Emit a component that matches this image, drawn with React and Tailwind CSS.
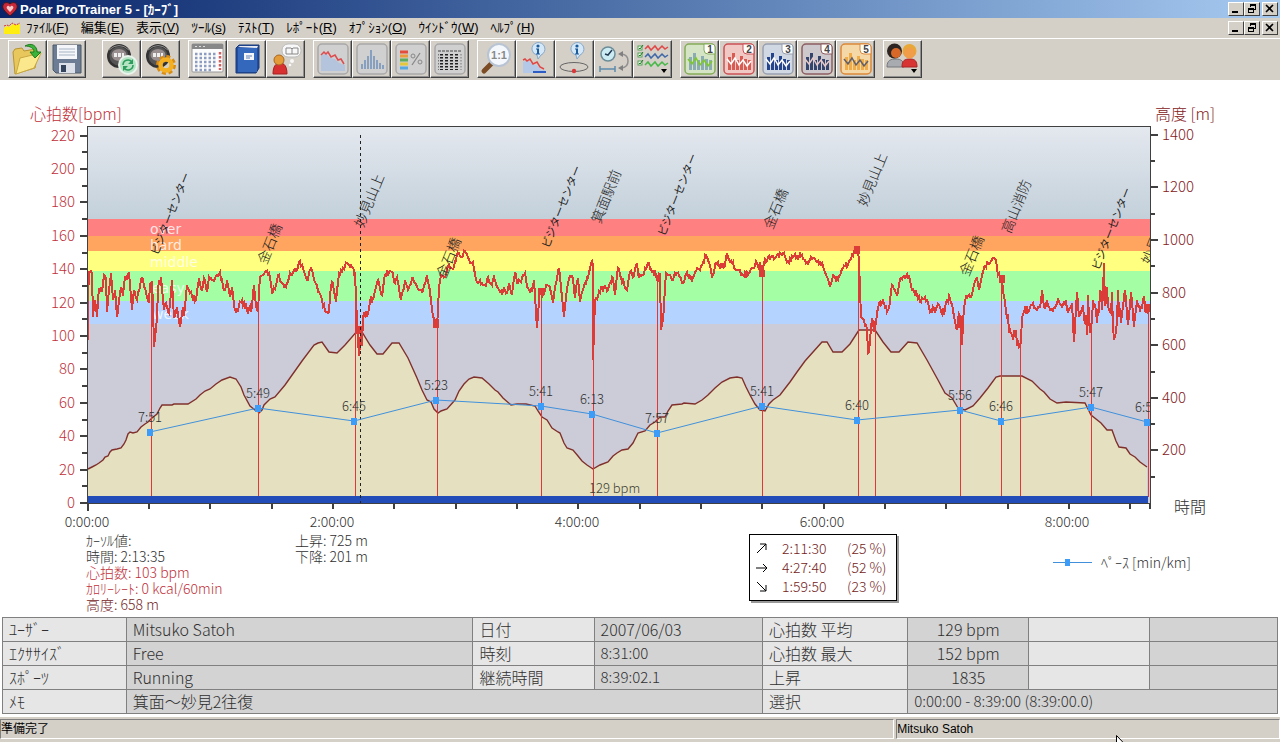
import React from "react";

/* ---------- chart data ---------- */

const heartRate = [
  [88, 340], [88, 300], [89, 272], [92, 273], [93, 317], [95, 300], [97, 317], [99, 288], [102, 292], [104, 275], [106, 278],
  [107, 312], [109, 290], [111, 273], [113, 300], [115, 290], [117, 317], [121, 287], [123, 296], [125, 277], [127, 280],
  [129, 272], [132, 310], [134, 290], [137, 300], [142, 278], [145, 288], [147, 298], [149, 303], [150, 284], [152, 282],
  [153, 306], [154, 347], [157, 318], [158, 288], [161, 277], [164, 310], [166, 303], [169, 313], [172, 280], [174, 318],
  [177, 307], [180, 327], [183, 307], [184, 316], [187, 285], [190, 293], [196, 300], [199, 280], [202, 290], [204, 278],
  [207, 292], [209, 277], [213, 280], [217, 275], [220, 272], [223, 287], [225, 290], [227, 282], [230, 297], [232, 287],
  [234, 305], [238, 312], [242, 300], [247, 310], [250, 306], [251, 312], [254, 285], [256, 306], [258, 312], [260, 277],
  [265, 272], [269, 273], [272, 293], [276, 285], [278, 275], [282, 283], [286, 287], [290, 273], [293, 272], [297, 270],
  [300, 261], [303, 268], [307, 280], [311, 268], [315, 282], [319, 292], [322, 300], [326, 312], [329, 312], [331, 286],
  [333, 283], [336, 302], [339, 273], [343, 268], [347, 263], [350, 267], [354, 270], [356, 290], [357, 328], [359, 356],
  [361, 330], [362, 346], [363, 317], [368, 313], [370, 301], [374, 296], [378, 280], [382, 295], [385, 275], [392, 272],
  [395, 283], [397, 277], [401, 300], [405, 280], [408, 290], [412, 278], [417, 287], [422, 292], [427, 275], [430, 292],
  [432, 310], [435, 320], [437, 328], [439, 287], [441, 275], [445, 277], [449, 265], [454, 267], [457, 254], [462, 257],
  [465, 251], [467, 254], [470, 263], [473, 262], [476, 280], [482, 283], [486, 287], [488, 277], [492, 285], [494, 277],
  [498, 288], [502, 295], [504, 287], [507, 293], [509, 283], [512, 295], [515, 272], [517, 283], [521, 282], [525, 273],
  [527, 287], [532, 292], [534, 280], [537, 328], [540, 290], [542, 297], [545, 291], [547, 285], [550, 287], [553, 303],
  [556, 283], [559, 268], [562, 296], [564, 317], [567, 287], [569, 278], [573, 278], [575, 298], [578, 278], [580, 302],
  [583, 290], [588, 278], [591, 263], [593, 265], [593, 360], [595, 300], [600, 293], [602, 287], [608, 290], [610, 283],
  [613, 278], [615, 295], [618, 268], [621, 278], [627, 290], [630, 272], [633, 277], [637, 263], [639, 278], [643, 275],
  [648, 263], [652, 272], [655, 272], [657, 280], [660, 274], [661, 330], [663, 320], [666, 273], [668, 275], [672, 280],
  [677, 273], [683, 283], [687, 272], [692, 282], [695, 272], [700, 270], [706, 255], [709, 263], [712, 278], [716, 263],
  [722, 267], [725, 266], [727, 253], [732, 263], [737, 270], [743, 275], [748, 275], [752, 268], [757, 263], [759, 270],
  [760, 262], [762, 277], [764, 263], [768, 257], [775, 258], [783, 253], [789, 263], [793, 257], [802, 255], [807, 262],
  [811, 257], [817, 262], [822, 263], [825, 272], [830, 287], [833, 275], [838, 280], [843, 268], [848, 265], [852, 255],
  [855, 250], [858, 250], [859, 262], [861, 317], [864, 320], [867, 328], [868, 353], [870, 340], [872, 318], [874, 332],
  [877, 312], [880, 302], [884, 303], [887, 312], [890, 302], [892, 285], [897, 295], [901, 278], [905, 278], [909, 275],
  [912, 290], [917, 295], [920, 302], [925, 297], [928, 302], [931, 310], [935, 313], [940, 307], [944, 315], [947, 300],
  [950, 298], [953, 310], [956, 327], [958, 320], [960, 317], [962, 345], [964, 307], [966, 295], [970, 297], [973, 290],
  [977, 277], [979, 290], [983, 272], [988, 263], [994, 258], [996, 260], [998, 275], [1002, 280], [1004, 297], [1007, 317],
  [1010, 330], [1013, 340], [1016, 330], [1017, 346], [1020, 347], [1022, 317], [1025, 308], [1028, 312], [1033, 303],
  [1037, 310], [1040, 307], [1042, 290], [1044, 307], [1047, 300], [1050, 310], [1055, 308], [1058, 298], [1062, 307],
  [1066, 300], [1068, 313], [1072, 303], [1074, 342], [1077, 292], [1079, 317], [1083, 305], [1087, 335], [1088, 295],
  [1090, 333], [1093, 300], [1097, 323], [1100, 290], [1102, 310], [1104, 263], [1105, 306], [1107, 287], [1110, 312],
  [1112, 292], [1113, 327], [1116, 332], [1118, 290], [1121, 323], [1123, 307], [1125, 290], [1128, 325], [1131, 292],
  [1134, 327], [1137, 300], [1140, 310], [1143, 300], [1147, 312], [1150, 307],
];

// stretches where the sensor jumps around more than usual
const noisy = [[234, 252, 5], [864, 876, 7], [929, 943, 6], [956, 962, 10], [1007, 1021, 10], [1084, 1119, 13], [1142, 1150, 7]];

function jitter(x) {
  const range = noisy.find(([from, to]) => x >= from && x <= to);
  const s = Math.sin(x * 127.1) * 43758.5453;
  return (s - Math.floor(s) - 0.5) * 2 * (range ? range[2] : 3);
}

function heartRatePath() {
  const out = [];
  for (let i = 0; i < heartRate.length - 1; i++) {
    const [x0, y0] = heartRate[i];
    const [x1, y1] = heartRate[i + 1];
    out.push(`${x0},${y0}`);
    for (let x = x0 + 1; x < x1; x++) {
      const y = y0 + ((y1 - y0) * (x - x0)) / (x1 - x0);
      out.push(`${x},${(y + jitter(x)).toFixed(1)}`);
    }
  }
  return out.join(" ");
}

const altitude =
  "88,469 92,467 96,465 99,463 103,460 105,457 108,456 110,452 112,450 117,449 121,448 124,444 126,440 128,434 130,432 133,433 137,432 141,427 145,424 148,422 152,418 157,414 160,408 162,405 172,405 174,404 188,404 196,399 200,395 205,391 210,389 216,384 222,380 230,377 236,379 241,387 244,395 250,406 255,410 257,410 259,413 262,410 264,405 270,399 275,397 285,385 302,361 314,345 318,343 322,342 329,352 337,353 345,345 358,330 362,332 370,345 377,354 383,354 392,343 399,343 408,358 417,378 422,390 427,400 431,402 434,409 438,413 441,411 447,409 455,400 459,391 464,384 469,379 474,377 482,378 489,384 495,390 498,392 503,398 511,405 517,404 526,404 535,406 538,411 542,417 547,420 552,428 558,432 560,433 564,443 567,448 573,450 578,456 582,461 587,465 593,469 600,465 608,462 613,456 617,453 622,450 628,449 633,443 638,433 645,431 650,425 655,422 660,417 665,417 668,411 672,405 682,404 684,403 695,404 702,400 708,395 715,388 722,382 730,378 737,377 742,378 746,387 750,395 755,404 760,410 765,411 769,404 773,400 780,395 790,382 797,372 805,361 822,342 827,342 833,352 842,352 850,344 859,330 875,330 883,342 891,352 899,352 908,342 917,343 927,360 938,380 945,393 952,398 958,408 965,410 973,406 980,398 988,388 996,377 1000,376 1022,376 1032,381 1040,389 1044,392 1050,399 1057,403 1066,402 1085,403 1089,411 1091,415 1101,423 1107,430 1112,430 1116,441 1119,447 1126,448 1130,454 1135,457 1140,462 1147,467";

// x and the height at which the line leaves the heart rate curve
const lapLines = [
  [151, 290], [258, 300], [355, 272], [437, 320], [541, 295], [593, 350], [657, 275], [762, 270],
  [858, 250], [875, 320], [960, 320], [1001, 278], [1020, 340], [1091, 310], [1148, 307],
];

const laps = [
  [150, 432, "7:51"], [258, 408, "5:49"], [354, 421, "6:45"], [436, 400, "5:23"], [541, 406, "5:41"],
  [592, 414, "6:13"], [657, 433, "7:57"], [762, 406, "5:41"], [857, 420, "6:40"], [960, 410, "5:56"],
  [1001, 421, "6:46"], [1091, 407, "5:47"], [1147, 422, "6:50"],
];

const places = [
  [153, 254, "ビジターセンター"], [261, 263, "金石橋"], [358, 226, "妙見山上"], [440, 277, "金石橋"],
  [544, 247, "ビジターセンター"], [595, 222, "箕面駅前"], [660, 235, "ビジターセンター"], [767, 228, "金石橋"],
  [861, 205, "妙見山上"], [963, 275, "金石橋"], [1005, 232, "高山消防"], [1094, 269, "ビジターセンター"],
  [1145, 263, "妙見山上"],
];

const zones = [
  { y: 219, h: 17, fill: "#ff8080", name: "over", x: 150, ty: 234 },
  { y: 236, h: 15, fill: "#ffa55f", name: "hard", x: 150, ty: 250 },
  { y: 251, h: 20, fill: "#ffff80", name: "middle", x: 150, ty: 267 },
  { y: 271, h: 30, fill: "#a4ffa4", name: "easy", x: 152, ty: 293 },
  { y: 301, h: 23, fill: "#b4d4ff", name: "weak", x: 152, ty: 319 },
];

function Chart() {
  const bpmTicks = Array.from({ length: 23 }, (_, i) => i * 10);
  const altTicks = Array.from({ length: 14 }, (_, i) => 100 + i * 100);
  const timeTicks = Array.from({ length: 18 }, (_, i) => i);
  return (
    <svg viewBox="0 80 1280 452" className="block w-full h-auto font-light" fontSize="15" role="img" aria-label="心拍数 / 高度">
      <defs>
        <linearGradient id="sky" x1="0" y1="0" x2="0" y2="1">
          <stop offset="0" stopColor="#e4e8ef" />
          <stop offset="1" stopColor="#c3d0da" />
        </linearGradient>
        <clipPath id="plot">
          <rect x="87" y="126" width="1063" height="378" />
        </clipPath>
      </defs>

      {/* Background and zones */}
      <rect x="88" y="127" width="1062" height="92" fill="url(#sky)" />
      {zones.map((z) => (
        <rect key={z.name} x="88" y={z.y} width="1062" height={z.h} fill={z.fill} />
      ))}
      <rect x="88" y="324" width="1062" height="179" fill="#cbccd8" />
      {zones.map((z) => (
        <text key={z.name} x={z.x} y={z.ty} fill="#fff" fillOpacity="0.8" fontSize="14" fontWeight="400" fontFamily="DejaVu Sans">{z.name}</text>
      ))}

      {/* Altitude */}
      <polygon points={`88,497 ${altitude} 1147,497`} fill="#e5e1c0" />
      <polyline points={altitude} fill="none" stroke="#80302c" strokeWidth="1.4" />
      {lapLines.map(([x, y]) => (
        <rect key={x} x={x} y={y} width="1" height={497 - y} fill="#e03838" />
      ))}

      {/* Heart rate */}
      <g clipPath="url(#plot)">
        <polyline points={heartRatePath()} fill="none" stroke="#dc3c38" strokeWidth="2" shapeRendering="crispEdges" />
        <g fill="#dc3c38">
          <rect x="854" y="246" width="6" height="8" />
          <rect x="759" y="270" width="6" height="7" />
          <rect x="538" y="288" width="7" height="7" />
          <rect x="433" y="319" width="6" height="9" />
          <rect x="999" y="275" width="6" height="8" />
          <rect x="957" y="316" width="5" height="12" />
          <rect x="357" y="326" width="6" height="8" />
          <rect x="1144" y="304" width="6" height="8" />
        </g>
      </g>

      <rect x="88" y="496" width="1060" height="7" fill="#224cb8" />
      <line x1="360.5" x2="360.5" y1="135" y2="503" stroke="#222" strokeDasharray="3 3" shapeRendering="crispEdges" />

      {/* Pace */}
      <polyline points={laps.map(([x, y]) => `${x},${y}`).join(" ")} fill="none" stroke="#4090dc" strokeWidth="1" />
      <g clipPath="url(#plot)">
        {laps.map(([x, y, t]) => (
          <g key={x}>
            <rect x={x - 3} y={y - 3} width="6" height="7" fill="#3c9cf8" />
            <text x={x} y={y - 10} fontSize="13" textAnchor="middle" fill="#303030">{t}</text>
          </g>
        ))}
        {places.map(([x, y, t]) => (
          <text
            key={x}
            transform={`translate(${x} ${y}) rotate(-68)`}
            fontSize={t.length > 4 ? 11 : 14}
            fontWeight={t.length > 4 ? 400 : 300}
            dominantBaseline="central"
            fill="#222"
          >
            {t}
          </text>
        ))}
      </g>
      <text x="589" y="493" fontSize="13" fill="#404034">129 bpm</text>

      {/* Axes */}
      <g stroke="#404040" shapeRendering="crispEdges">
        <path d="M87.5 504V126.5H1150.5V504M87 503.5H1151" fill="none" />
        {bpmTicks.map((v) => (
          <line key={v} x1={v % 20 ? 82 : 80} x2="87" y1={503 - v * 1.67} y2={503 - v * 1.67} strokeWidth="2" />
        ))}
        {altTicks.map((v) => (
          <line key={v} x1="1151" x2={v % 200 ? 1155 : 1158} y1={503 - v * 0.263} y2={503 - v * 0.263} strokeWidth="2" />
        ))}
        {timeTicks.map((v) => (
          <line key={v} x1={87.5 + v * 61.35} x2={87.5 + v * 61.35} y1="504" y2={v ? 509 : 511} strokeWidth="2" />
        ))}
        <line x1="1150" x2="1150" y1="504" y2="509" strokeWidth="2" />
      </g>
      <g fill="#c0303a" textAnchor="end">
        {bpmTicks.filter((v) => v % 20 === 0).map((v) => (
          <text key={v} x="75" y={508 - v * 1.67}>{v}</text>
        ))}
      </g>
      <g fill="#842020">
        {altTicks.filter((v) => v % 200 === 0).map((v) => (
          <text key={v} x="1162" y={508 - v * 0.263}>{v}</text>
        ))}
        <text x="1155" y="120" fontSize="16">高度 [m]</text>
      </g>
      <text x="30" y="120" fontSize="16" fill="#c0303a">心拍数[bpm]</text>
      <g fill="#303030" fontSize="14" textAnchor="middle">
        {["0:00:00", "2:00:00", "4:00:00", "6:00:00", "8:00:00"].map((t, i) => (
          <text key={t} x={87 + i * 245} y="527">{t}</text>
        ))}
      </g>
      <text x="1174" y="513" fontSize="16" fill="#303030">時間</text>
    </svg>
  );
}

/* ---------- toolbar icons ---------- */

const Frame = ({ color = "#a8a8a8", fill = "#d0d0d0", children }) => (
  <>
    <rect x="2" y="2" width="30" height="30" rx="4" fill={fill} stroke={color} strokeWidth="1.5" />
    {children}
  </>
);

const Watch = () => (
  <>
    <circle cx="14" cy="14" r="12" fill="#333" />
    <circle cx="14" cy="14" r="9.5" fill="#555" />
    <ellipse cx="14" cy="13" rx="7.5" ry="6" fill="#9a8f90" />
    <path d="M9 11h3v4h-3zM13 11h3v4h-3zM17 11h2v4h-2z" fill="#eee" />
    <path d="M4 8q10-9 20 0" stroke="#888" fill="none" />
  </>
);

const Info = ({ x }) => (
  <>
    <path d={`M${x - 6} 8a6.500 6.500 0 1 1 9 5l-3 4-1-4a6.500 6.500 0 0 1-5-5z`} fill="#d4e8f8" stroke="#88a8c8" />
    <circle cx={x} cy="4" r="1.600" fill="#1c5c9c" />
    <path d={`M${x - 2} 6.500h3v5h1v1h-4v-1h1v-4h-1z`} fill="#1c5c9c" />
  </>
);

const Numbered = ({ n, color, fill, bars, line }) => (
  <Frame color={color} fill={fill}>
    <path d="M6 28V15h3v13zM10 28V11h3v17zM14 28V18h3v10zM18 28V14h3v14zM22 28V17h3v11zM26 28V18h3v10z" fill={bars} />
    <path d="M5 17l4 5 4-6 4 7 4-5 4 6 4-5" fill="none" stroke={line} strokeWidth="1.500" />
    <path d="M21 2h8a3 3 0 0 1 3 3v7h-7a4 4 0 0 1-4-4z" fill="#fff" stroke={color} />
    <text x="27" y="11" fontSize="10" fontWeight="700" textAnchor="middle" fill="#444">{n}</text>
  </Frame>
);

const icons = {
  open: (
    <>
      <path d="M2 10l2-3 7-1 2 3 12-2 2 4-3 15-20 6z" fill="#e8c85c" stroke="#b89430" />
      <path d="M9 16l21-5-7 15-18 6z" fill="#fce88c" stroke="#c8a840" />
      <path d="M14 4c7-4 12 0 12 6h4l-6 6-5-6h4c0-4-4-6-9-6z" fill="#3cb43c" stroke="#1c7c1c" />
    </>
  ),
  save: (
    <>
      <path d="M3 3h28v28H6l-3-3z" fill="#6c7c94" stroke="#4c5868" />
      <rect x="7" y="3" width="20" height="14" fill="#f4f6fa" />
      <path d="M9 7h16M9 10h16M9 13h16" stroke="#a8b4c4" />
      <rect x="9" y="21" width="16" height="10" fill="#dce0e8" />
      <rect x="11" y="23" width="5" height="7" fill="#34445c" />
    </>
  ),
  sync: (
    <>
      <Watch />
      <circle cx="23" cy="23" r="9" fill="#b4e4c4" stroke="#e8f4ec" strokeWidth="2" />
      <path d="M18 23a5 5 0 0 1 9-3M28 23a5 5 0 0 1-9 3" fill="none" stroke="#2c9c5c" strokeWidth="1.500" />
      <path d="M28 17v5h-5zM18 29v-5h5z" fill="#2c9c5c" />
    </>
  ),
  settings: (
    <>
      <Watch />
      <circle cx="22" cy="23" r="7.500" fill="none" stroke="#d88c14" strokeWidth="5" strokeDasharray="3.500 2.400" />
      <circle cx="22" cy="23" r="5.500" fill="none" stroke="#f4b020" strokeWidth="4.500" />
    </>
  ),
  calendar: (
    <>
      <rect x="1" y="2" width="31" height="28" rx="1" fill="#fcfcfc" stroke="#989898" />
      <rect x="1" y="2" width="31" height="5" fill="#888" />
      <path d="M4 4.500h11" stroke="#ddd" strokeDasharray="2 2" />
      <path d="M4 12h22M4 16h22M4 20h22M4 24h22M4 28h18" stroke="#8c9cc0" strokeWidth="2.500" strokeDasharray="2.500 2" />
      <path d="M29 10v18" stroke="#d06060" strokeWidth="2.500" strokeDasharray="2.500 1.500" />
    </>
  ),
  book: (
    <>
      <path d="M6 6l3-3h20v23l-3 5H6z" fill="#244c9c" stroke="#183878" />
      <path d="M8 6h19v24H8z" fill="#3468bc" />
      <path d="M8 5l2-1h18l-1 2z" fill="#e8ecf4" />
      <rect x="14" y="11" width="10" height="7" fill="#f4f6fc" />
      <path d="M16 14h6M16 16h4" stroke="#6080b4" />
    </>
  ),
  coach: (
    <>
      <path d="M4 32c0-8 3-11 7-11s7 3 7 11z" fill="#d83030" stroke="#a42020" />
      <circle cx="10" cy="18" r="5" fill="#e49c38" stroke="#a86820" />
      <rect x="13" y="2" width="19" height="13" rx="6" fill="#f8f8f8" stroke="#bbb" />
      <path d="M17 6h5l1 1 1-1h5v6h-12zM23 7v5" fill="none" stroke="#888" />
      <circle cx="23" cy="19" r="2" fill="#f8f8f8" />
      <circle cx="21" cy="23" r="1.300" fill="#f8f8f8" />
    </>
  ),
  curve: (
    <Frame>
      <path d="M5 14l5-3 4 5 5 1 4 4 6 2v6H5z" fill="#b4c4dc" />
      <path d="M5 13l3-3 2 2 2-2 3 5 4-2 3 5 3-1 3 5" fill="none" stroke="#dc4c50" strokeWidth="1.500" />
    </Frame>
  ),
  histogram: (
    <Frame>
      <path d="M7 27v-5M10 27v-9M13 27V14M16 27V8M19 27V14M22 27V18M25 27v-6M28 27v-4" stroke="#88a0c0" strokeWidth="2" />
    </Frame>
  ),
  percent: (
    <Frame>
      <path d="M6 10h8" stroke="#e44c3c" strokeWidth="3" />
      <path d="M6 14h8" stroke="#ec9c3c" strokeWidth="3" />
      <path d="M6 18h8" stroke="#5cac5c" strokeWidth="3" />
      <path d="M6 22h8" stroke="#e4c83c" strokeWidth="3" />
      <path d="M6 26h8" stroke="#58a8e0" strokeWidth="3" />
      <path d="M26 11l-8 12" stroke="#888" strokeWidth="1.300" />
      <circle cx="19" cy="14" r="2" fill="none" stroke="#888" />
      <circle cx="26" cy="20" r="2" fill="none" stroke="#888" />
    </Frame>
  ),
  list: (
    <Frame>
      <path d="M5 9h23" stroke="#444" strokeDasharray="3 1" />
      <path d="M8.500 12v16M13.500 12v16M18.500 12v16M23.500 12v16" stroke="#222" strokeWidth="3" strokeDasharray="1.500 1.500" />
      <path d="M5.500 12v16M28 12v16" stroke="#777" strokeDasharray="1.500 1.500" />
    </Frame>
  ),
  zoom: (
    <>
      <path d="M13 20L4 29" stroke="#7c4c24" strokeWidth="5" strokeLinecap="round" />
      <circle cx="19" cy="13" r="11" fill="#f4f8fc" stroke="#b8c4d4" strokeWidth="2" />
      <text x="19" y="17" fontSize="11" fontWeight="700" textAnchor="middle" fill="#888">1:1</text>
    </>
  ),
  curveInfo: (
    <>
      <path d="M4 20l5-2 4 4 5 1 4 5h4v3H4z" fill="#b4c8e8" />
      <path d="M4 18l2-1 2 2 3-2 3 5 4-2 3 5 4 2" fill="none" stroke="#e04848" strokeWidth="1.500" />
      <path d="M14 30h13" stroke="#2c5cc4" strokeWidth="2" />
      <Info x={19} />
    </>
  ),
  lapInfo: (
    <>
      <ellipse cx="16" cy="25" rx="14" ry="4.500" fill="none" stroke="#666" />
      <circle cx="16" cy="29" r="2.200" fill="#d83838" />
      <Info x={19} />
    </>
  ),
  clock: (
    <>
      <circle cx="11" cy="12" r="7" fill="#ccecf4" stroke="#6c8c98" strokeWidth="1.500" />
      <path d="M15 8l-4 5-3-1" fill="none" stroke="#243c54" strokeWidth="1.500" />
      <path d="M3 27h15M3 24v6M18 24v6" stroke="#5c8cac" strokeWidth="1.500" />
      <path d="M25 12q6 1 6 7t-6 7" fill="none" stroke="#909090" strokeWidth="1.500" />
      <path d="M26 9v6l-5-3zM26 23v6l-5-3z" fill="#808080" />
    </>
  ),
  checks: (
    <>
      {[6, 13, 21].map((y) => (
        <React.Fragment key={y}>
          <rect x="2" y={y - 2} width="4" height="4" fill="#f0fff0" stroke="#58a058" />
          <path d={`M3 ${y}l1 1 3-4`} fill="none" stroke="#207820" />
        </React.Fragment>
      ))}
      <path d="M9 7l3-3 3 4 4-4 3 4 4-4 3 3 3-2" fill="none" stroke="#e04848" strokeWidth="1.500" />
      <path d="M9 15l3-3 3 4 4-4 3 4 4-4 3 3 3-2" fill="none" stroke="#4068a8" strokeWidth="1.500" />
      <path d="M9 23l3-3 3 4 4-4 3 4 4-4 3 3 3-2" fill="none" stroke="#48b848" strokeWidth="1.500" />
      <path d="M25 27h6l-3 4z" fill="#000" />
    </>
  ),
  one: <Numbered n="1" color="#84ac58" fill="#d4e4c4" bars="#8cacb4" line="#7cc828" />,
  two: <Numbered n="2" color="#cc5054" fill="#f0c8c4" bars="#d85c54" line="#fff" />,
  three: <Numbered n="3" color="#98a0b0" fill="#d0d8e4" bars="#24448c" line="#fff" />,
  four: <Numbered n="4" color="#8c5c60" fill="#ccc8cc" bars="#34446c" line="#e8c8c8" />,
  five: <Numbered n="5" color="#dc8838" fill="#f4d8a8" bars="#f0ac48" line="#60606c" />,
  people: (
    <>
      <path d="M1 25c0-7 4-8 9-8s8 2 8 8z" fill="#a8acb0" stroke="#74787c" />
      <path d="M16 25c0-7 3-8 8-8s7 2 7 8z" fill="#d83434" stroke="#a82424" />
      <circle cx="8.500" cy="9" r="7.500" fill="#2c2420" />
      <circle cx="10" cy="11" r="5" fill="#d86828" />
      <circle cx="23.500" cy="9" r="7" fill="#e8a838" />
      <circle cx="23.500" cy="11" r="5.500" fill="#f09c48" />
      <path d="M25 27h6l-3 4z" fill="#000" />
    </>
  ),
};

const toolGroups = [
  [["open", "開く"], ["save", "保存"]],
  [["sync", "同期"], ["settings", "設定"]],
  [["calendar", "カレンダー"], ["book", "日誌"], ["coach", "コーチ"]],
  [["curve", "カーブ"], ["histogram", "分布"], ["percent", "割合"], ["list", "一覧"]],
  [["zoom", "1:1"], ["curveInfo", "カーブ情報"], ["lapInfo", "ラップ情報"], ["clock", "時間 / 距離"], ["checks", "カーブ選択"]],
  [["one", "1"], ["two", "2"], ["three", "3"], ["four", "4"], ["five", "5"]],
  [["people", "ユーザー"]],
];

function Toolbar() {
  return (
    <div className="flex gap-2 border-t border-white bg-[#d4d0c8] px-2 pt-px pb-0.5">
      {toolGroups.map((group, i) => (
        <div key={i} className={i === 0 ? "flex mr-2" : "flex"}>
          {group.map(([name, label]) => (
            <button
              key={name}
              type="button"
              aria-label={label}
              className="flex h-[38px] w-[39px] items-center justify-center border border-t-white border-l-white border-r-[#404040] border-b-[#404040] bg-[#d4d0c8] shadow-[inset_-1px_-1px_0_#909090]"
            >
              <svg viewBox="0 0 34 34" className="h-[34px] w-[34px]">{icons[name]}</svg>
            </button>
          ))}
        </div>
      ))}
    </div>
  );
}

/* ---------- window frame ---------- */

function WindowButtons() {
  const cls =
    "flex h-3.5 w-4 items-center justify-center border border-t-white border-l-white border-r-[#404040] border-b-[#404040] bg-[#d4d0c8]";
  return (
    <div className="ml-auto flex pr-0.5">
      <button type="button" aria-label="最小化" className={cls}>
        <svg viewBox="0 0 12 10" className="h-2.5 w-3"><path d="M2 7h6v2H2z" /></svg>
      </button>
      <button type="button" aria-label="元に戻す" className={cls}>
        <svg viewBox="0 0 12 10" className="h-2.5 w-3" fill="none" stroke="#000" shapeRendering="crispEdges">
          <path d="M4.500 3V.5h5v5H8M4 1.500h6M2.500 4.500h5v4h-5zM2 5.500h6" />
        </svg>
      </button>
      <button type="button" aria-label="閉じる" className={`${cls} ml-0.5`}>
        <svg viewBox="0 0 12 10" className="h-2.5 w-3"><path d="M2 1l7 7M9 1l-7 7" stroke="#000" strokeWidth="1.600" /></svg>
      </button>
    </div>
  );
}

const menus = [
  ["ﾌｧｲﾙ", "F"], ["編集", "E"], ["表示", "V"], ["ﾂｰﾙ", "s"], ["ﾃｽﾄ", "T"],
  ["ﾚﾎﾟｰﾄ", "R"], ["ｵﾌﾟｼｮﾝ", "O"], ["ｳｲﾝﾄﾞｳ", "W"], ["ﾍﾙﾌﾟ", "H"],
];

function Header() {
  return (
    <header>
      <div className="flex h-[18px] items-center bg-linear-to-r from-[#0a246a] to-[#a6caf0] pl-0.5">
        <svg viewBox="0 0 16 16" className="mr-0.5 h-4 w-4">
          <path d="M8 15C2 10 0 7 1 4c1-3 5-3 7-1 2-2 6-2 7 1 1 3-1 6-7 11z" fill="#c82838" stroke="#401820" />
          <path d="M8 11C5 8 4 7 5 5.500 6 4 7 5 8 6c1-1 2-2 3-.5C12 7 11 8 8 11z" fill="#f8c8c8" />
        </svg>
        <h1 className="text-[13px] leading-none font-bold text-white">Polar ProTrainer 5 - [ｶｰﾌﾞ]</h1>
        <WindowButtons />
      </div>
      <div className="flex h-5 items-center bg-[#d4d0c8] pl-1 text-[13px] text-black">
        <svg viewBox="0 0 16 12" className="mr-1.5 h-3 w-4">
          <path d="M0 12V6l3-2 2 1 4-3 3 1 4-1v10z" fill="#ffec10" />
          <path d="M0 4l3-1 2 1 3-3 4 2 4-2" stroke="#d83020" strokeDasharray="2 1" fill="none" />
        </svg>
        <nav className="flex gap-3">
          {menus.map(([name, key]) => (
            <button key={key} type="button" className="leading-4">
              {name}(<span className="underline">{key}</span>)
            </button>
          ))}
        </nav>
        <WindowButtons />
      </div>
      <Toolbar />
    </header>
  );
}

/* ---------- below the chart ---------- */

function Readout() {
  return (
    <div className="grid h-[85px] grid-cols-[295fr_454fr_304fr_227fr] text-[14px] leading-4 font-light text-[#303030]">
      <div className="pl-[86px] whitespace-nowrap">
        <p>ｶｰｿﾙ値:</p>
        <p>時間: 2:13:35</p>
        <p className="text-[#c0303a]">心拍数: 103 bpm</p>
        <p className="text-[#c0303a]">ｶﾛﾘｰﾚｰﾄ: 0 kcal/60min</p>
        <p className="text-[#741c1c]">高度: 658 m</p>
      </div>
      <div>
        <p>上昇: 725 m</p>
        <p>下降: 201 m</p>
      </div>
      <div>
        <ul className="mt-0.5 w-[148px] border border-black bg-white py-1 pl-1.5 leading-[19px] text-[#741c1c] shadow-[2px_2px_0_#999]">
          {[
            ["M1 10L10 1M4 1h6v6", "2:11:30", "(25 %)"],
            ["M0 6h11M7 2l4 4-4 4", "4:27:40", "(52 %)"],
            ["M1 1l9 9M4 10h6V4", "1:59:50", "(23 %)"],
          ].map(([d, time, share]) => (
            <li key={time} className="flex items-center">
              <svg viewBox="0 0 12 12" className="mr-3.5 h-3 w-3" fill="none" stroke="#000"><path d={d} /></svg>
              <span className="w-[65px]">{time}</span>
              <span>{share}</span>
            </li>
          ))}
        </ul>
      </div>
      <div className="flex items-start pt-[22px]">
        <svg viewBox="0 0 40 16" className="mr-2 h-4 w-10">
          <path d="M0 8.500h39" stroke="#4090dc" />
          <rect x="12" y="5" width="5" height="7" fill="#3c9cf8" />
        </svg>
        <span>ﾍﾟｰｽ [min/km]</span>
      </div>
    </div>
  );
}

const Label = ({ children }) => (
  <th scope="row" className="h-6 border border-[#808080] bg-[#e6e6e6] px-1.5 pb-0.5 text-left font-light">{children}</th>
);

const Value = ({ children, span, className = "" }) => (
  <td colSpan={span} className={`h-6 border border-[#808080] bg-[#d3d3d3] px-1.5 pb-0.5 ${className}`}>{children}</td>
);

function Details() {
  return (
    <div className="px-0.5">
      <table className="w-full table-fixed border-collapse text-[16px] leading-5 font-light text-[#303030]">
        <colgroup>
          <col className="w-[9.7%]" />
          <col className="w-[27.2%]" />
          <col className="w-[9.5%]" />
          <col className="w-[13.2%]" />
          <col className="w-[11.4%]" />
          <col className="w-[9.5%]" />
          <col className="w-[9.5%]" />
          <col className="w-[10%]" />
        </colgroup>
        <tbody>
          <tr>
            <Label>ﾕｰｻﾞｰ</Label>
            <Value>Mitsuko Satoh</Value>
            <Label>日付</Label>
            <Value>2007/06/03</Value>
            <Label>心拍数 平均</Label>
            <Value className="text-center">129 bpm</Value>
            <Label />
            <Value />
          </tr>
          <tr>
            <Label>ｴｸｻｻｲｽﾞ</Label>
            <Value>Free</Value>
            <Label>時刻</Label>
            <Value className="text-[15px]">8:31:00</Value>
            <Label>心拍数 最大</Label>
            <Value className="text-center">152 bpm</Value>
            <Label />
            <Value />
          </tr>
          <tr>
            <Label>ｽﾎﾟｰﾂ</Label>
            <Value>Running</Value>
            <Label>継続時間</Label>
            <Value className="text-[15px]">8:39:02.1</Value>
            <Label>上昇</Label>
            <Value className="text-center">1835</Value>
            <Label />
            <Value />
          </tr>
          <tr>
            <Label>ﾒﾓ</Label>
            <Value span={3}>箕面～妙見2往復</Value>
            <Label>選択</Label>
            <Value span={3} className="text-[15px]">0:00:00 - 8:39:00 (8:39:00.0)</Value>
          </tr>
        </tbody>
      </table>
    </div>
  );
}

function StatusBar() {
  return (
    <footer className="relative mt-[3px] bg-[#d4d0c8] pt-0.5 pb-1 text-[12px] leading-[18px] text-black">
      <div className="flex gap-0.5">
        <p className="flex-[895] border border-[#808080] border-r-white border-b-white">準備完了</p>
        <p className="flex-[383] border border-[#808080] border-r-white border-b-white">Mitsuko Satoh</p>
      </div>
      <svg viewBox="0 0 12 19" className="absolute top-[18px] left-[87.2%] h-[19px] w-3">
        <path d="M.5.500v15l3.500-3.500 2.500 6 2-1-2.500-5.500h5z" fill="#fff" stroke="#000" />
      </svg>
    </footer>
  );
}

export default function App() {
  return (
    <div className="min-h-screen overflow-hidden bg-white font-['Liberation_Sans','Noto_Sans_CJK_JP',sans-serif]">
      <Header />
      <main className="font-['Noto_Sans_CJK_JP',sans-serif]">
        <Chart />
        <Readout />
        <Details />
      </main>
      <StatusBar />
    </div>
  );
}
